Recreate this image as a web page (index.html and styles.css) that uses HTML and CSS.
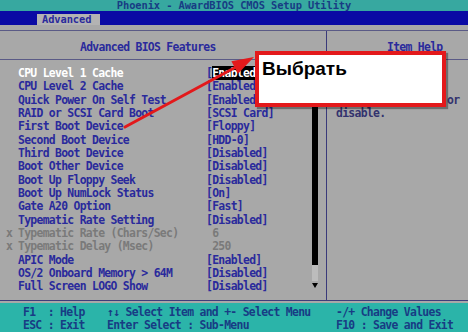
FILE: index.html
```html
<!DOCTYPE html>
<html lang="ru">
<head>
  <meta charset="UTF-8">
  <title>Advanced BIOS Features</title>
  <link rel="stylesheet" href="styles.css">
</head>
<body>
  <div class="bios">
    <div class="titlebar">Phoenix - AwardBIOS CMOS Setup Utility</div>
    <div class="menubar"><span class="tab">Advanced</span></div>

    <div class="screen">
      <div class="frame">
        <div class="panel-main">
          <div class="panel-head main-head">Advanced BIOS Features</div>
          <div class="panel-body">
            <div class="items">
              <div class="row sel"><span></span><span class="label">CPU Level 1 Cache</span><span>[<span class="hl">Enabled]</span></span></div>
              <div class="row"><span></span><span>CPU Level 2 Cache</span><span>[Enabled]</span></div>
              <div class="row"><span></span><span>Quick Power On Self Test</span><span>[Enabled]</span></div>
              <div class="row"><span></span><span>RAID or SCSI Card Boot</span><span>[SCSI Card]</span></div>
              <div class="row"><span></span><span>First Boot Device</span><span>[Floppy]</span></div>
              <div class="row"><span></span><span>Second Boot Device</span><span>[HDD-0]</span></div>
              <div class="row"><span></span><span>Third Boot Device</span><span>[Disabled]</span></div>
              <div class="row"><span></span><span>Boot Other Device</span><span>[Disabled]</span></div>
              <div class="row"><span></span><span>Boot Up Floppy Seek</span><span>[Disabled]</span></div>
              <div class="row"><span></span><span>Boot Up NumLock Status</span><span>[On]</span></div>
              <div class="row"><span></span><span>Gate A20 Option</span><span>[Fast]</span></div>
              <div class="row"><span></span><span>Typematic Rate Setting</span><span>[Disabled]</span></div>
              <div class="row off"><span>x</span><span>Typematic Rate (Chars/Sec)</span><span> 6</span></div>
              <div class="row off"><span>x</span><span>Typematic Delay (Msec)</span><span> 250</span></div>
              <div class="row"><span></span><span>APIC Mode</span><span>[Enabled]</span></div>
              <div class="row"><span></span><span>OS/2 Onboard Memory &gt; 64M</span><span>[Disabled]</span></div>
              <div class="row"><span></span><span>Full Screen LOGO Show</span><span>[Disabled]</span></div>
            </div>
            <div class="scroll">
              <div class="thumb"></div>
              <div class="track"></div>
              <div class="down"></div>
            </div>
          </div>
        </div>

        <div class="panel-help">
          <div class="panel-head help-head">Item Help</div>
          <div class="help-text">Menu Level  &#9658;

Select to enable  or
disable.</div>
        </div>
      </div>
    </div>

    <div class="footer">
      <span>F1  : Help</span><span>&#8593;&#8595; Select Item and +- Select Menu</span><span>-/+ Change Values</span>
      <span>ESC : Exit</span><span>Enter Select : Sub-Menu</span><span>F10 : Save and Exit</span>
    </div>

    <!-- annotation over the screenshot -->
    <svg class="arrow" width="468" height="332" viewBox="0 0 468 332">
      <line x1="125" y1="127" x2="236" y2="67" stroke="#e3191b" stroke-width="3" stroke-linecap="round"/>
      <polygon points="254,57 238,73.7 231.4,61.3" fill="#e3191b"/>
    </svg>
    <div class="callout">Выбрать</div>
  </div>
</body>
</html>
```

FILE: styles.css
```css
body {
  margin: 0;
  width: 468px;
  height: 332px;
  overflow: hidden;
  background-color: #a8a8a8;
  font-family: "DejaVu Sans Mono", monospace;
  font-weight: bold;
  font-size: 11.4px;
  letter-spacing: -0.69px;
}

.bios {
  position: relative;
  width: 468px;
  height: 332px;
  display: flex;
  flex-direction: column;
}

.titlebar {
  height: 11px;
  line-height: 11px;
  font-size: 10.4px;
  letter-spacing: -0.09px;
  background-color: #37a8a0;
  color: #183c84;
  text-align: center;
  white-space: pre;
}

.menubar {
  height: 14px;
  box-sizing: border-box;
  padding: 3px 0 0 37px;
  background-color: #0a0aa4;
}

.tab {
  display: block;
  width: 63px;
  height: 11px;
  line-height: 11px;
  font-size: 10.4px;
  letter-spacing: -0.09px;
  box-sizing: border-box;
  padding-left: 5px;
  background-color: #b3b3b3;
  color: #2a2a9c;
}

.screen {
  flex: 1;
  padding: 5px 0 2px;
  background-color: #a8a8a8;
}

.frame {
  display: flex;
  height: 271px;
  box-sizing: border-box;
  border-top: 1px solid #5a5a86;
  border-bottom: 1px solid #3e3e7a;
}

.panel-main {
  width: 327px;
  box-sizing: border-box;
  border-right: 1px solid #3a3a7a;
  display: flex;
  flex-direction: column;
}

.panel-head {
  height: 29px;
  box-sizing: border-box;
  padding-top: 10px;
  line-height: 13px;
  border-bottom: 1px solid #5a5a86;
  color: #2a2a9c;
  white-space: pre;
}

.main-head {
  padding-left: 80px;
}

.help-head {
  padding-left: 60px;
}

.panel-body {
  flex: 1;
  display: flex;
  padding-top: 7px;
}

.items {
  flex: 1;
  padding-left: 6px;
}

.row {
  display: grid;
  grid-template-columns: 12px 188px auto;
  height: 13.33px;
  line-height: 13.33px;
  white-space: pre;
  color: #2a2a9c;
}

.row.sel .label {
  color: #fff;
}

.row.off {
  color: #7a7a7a;
}

.hl {
  background-color: #000;
  color: #fff;
}

.scroll {
  width: 6px;
  margin-right: 8px;
  display: flex;
  flex-direction: column;
}

.thumb {
  height: 198px;
  background-color: #000;
}

.track {
  height: 16px;
  background-color: #bcbcbc;
}

.down {
  width: 0;
  height: 0;
  margin-top: 2px;
  border-left: 3px solid transparent;
  border-right: 3px solid transparent;
  border-top: 5px solid #000;
}

.panel-help {
  flex: 1;
  display: flex;
  flex-direction: column;
}

.help-text {
  padding: 7px 0 0 9px;
  line-height: 13.33px;
  white-space: pre;
  color: #33336e;
}

.footer {
  height: 29px;
  box-sizing: border-box;
  padding: 3px 0 0 23px;
  display: grid;
  grid-template-columns: 84px 229px auto;
  line-height: 13px;
  white-space: pre;
  background-color: #2bb4a9;
  color: #183c84;
}

.arrow {
  position: absolute;
  left: 0;
  top: 0;
  pointer-events: none;
}

.callout {
  position: absolute;
  left: 255px;
  top: 51px;
  width: 191px;
  height: 56px;
  box-sizing: border-box;
  padding: 4px 0 0 3px;
  border: 4px solid #e3191b;
  background-color: #fff;
  box-shadow: 2px 2px 1px rgba(0, 0, 0, 0.35);
  font-family: "Liberation Sans", Arial, sans-serif;
  font-size: 19px;
  line-height: 20px;
  letter-spacing: 0;
  color: #000;
}
```
